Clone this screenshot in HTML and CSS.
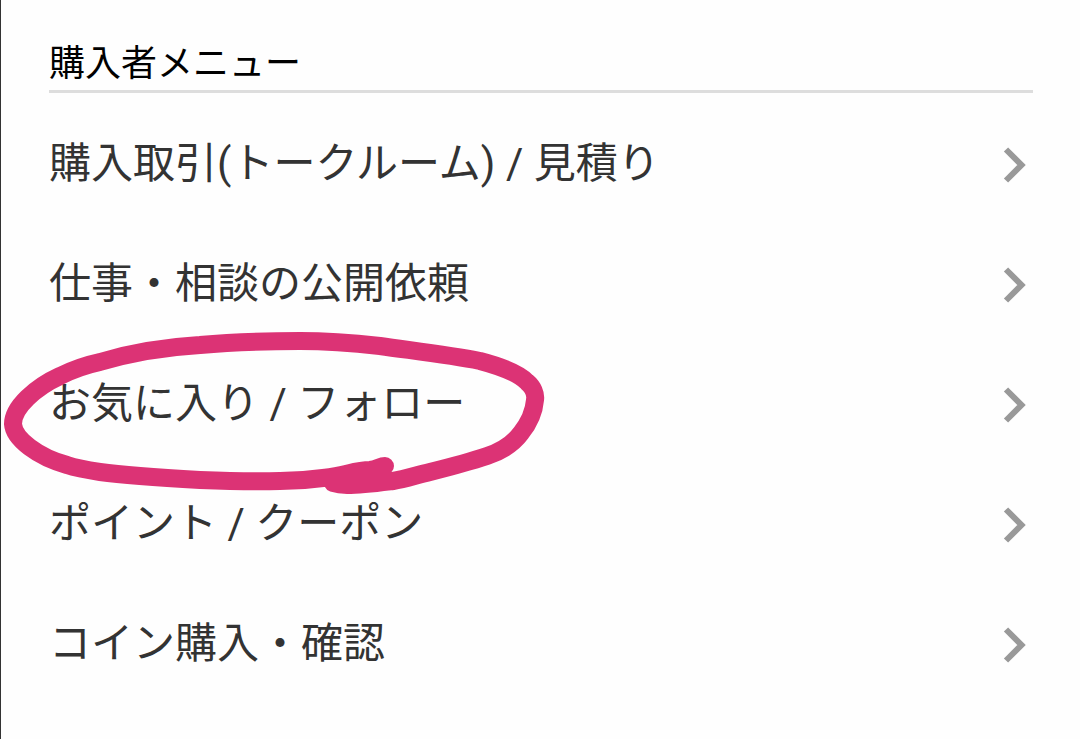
FILE: index.html
```html
<!DOCTYPE html>
<html lang="ja">

<head>
  <meta charset="utf-8">
  <meta name="viewport" content="width=device-width, initial-scale=1">
  <title>購入者メニュー</title>

  <link rel="stylesheet" href="styles.css">
</head>

<body>
  <nav class="menu" aria-labelledby="menu-title">
    <h1 class="menu-title" id="menu-title">購入者メニュー</h1>
    <ul class="menu-list">
      <li class="menu-item">
        <a class="menu-link" href="#talkroom">購入取引(トークルーム) / 見積り
          <svg class="chevron" viewBox="0 0 24 36" aria-hidden="true"><path d="M3 2.5 18.5 18 3 33.5"/></svg>
        </a>
      </li>
      <li class="menu-item">
        <a class="menu-link" href="#requests">仕事・相談の公開依頼
          <svg class="chevron" viewBox="0 0 24 36" aria-hidden="true"><path d="M3 2.5 18.5 18 3 33.5"/></svg>
        </a>
      </li>
      <li class="menu-item">
        <a class="menu-link" href="#favorites">お気に入り / フォロー
          <svg class="chevron" viewBox="0 0 24 36" aria-hidden="true"><path d="M3 2.5 18.5 18 3 33.5"/></svg>
        </a>
        <!-- hand-drawn circle -->
        <svg class="marker" viewBox="0 0 560 180" aria-hidden="true">
          <path d="M385 146C380 146 378 149 370 150C361 150 354 152 346 154C338 156 331 157 323 158C309 160 295 161 280 161C250 162 225 161 200 160C165 158 130 156 100 152C87 150 76 148 67 145C38 137 14 119 13 104C13 87 36 67 60 56C72 50 86 45 100 42C130 33 166 27 200 25C233 22 265 21 300 21C328 21 353 23 380 26C415 31 450 35 480 41C503 47 518 53 527 62C533 67 536 74 535 80C534 92 529 103 521 113C513 124 502 131 487 136C469 142 450 147 430 152C417 155 405 159 393 161C377 163 362 165 347 165C341 165 336 164 333 163"/>
        </svg>
      </li>
      <li class="menu-item">
        <a class="menu-link" href="#points">ポイント / クーポン
          <svg class="chevron" viewBox="0 0 24 36" aria-hidden="true"><path d="M3 2.5 18.5 18 3 33.5"/></svg>
        </a>
      </li>
      <li class="menu-item">
        <a class="menu-link" href="#coins">コイン購入・確認
          <svg class="chevron" viewBox="0 0 24 36" aria-hidden="true"><path d="M3 2.5 18.5 18 3 33.5"/></svg>
        </a>
      </li>
    </ul>
  </nav>
</body>

</html>
```
FILE: styles.css
```css
body {
  margin: 0;
  background-color: #fefefe;
  color: #333333;
  font-family: Roboto, "Noto Sans CJK JP", sans-serif;
}

.menu {
  box-sizing: border-box;
  min-height: 100vh;
  padding: 38px 47px 0 48px;
  border-left: 1px solid #333333;
}

.menu-title {
  margin: 0;
  border-bottom: 3px solid #dddddd;
  color: #000000;
  font-size: 36px;
  font-weight: 400;
  line-height: 52px;
}

.menu-list {
  list-style-type: none;
  margin: 0;
  padding: 6px 0 0;
}

.menu-item {
  position: relative;
}

.menu-link {
  display: flex;
  align-items: center;
  justify-content: space-between;
  height: 120px;
  color: #333333;
  font-size: 42px;
  text-decoration: none;
}

.chevron {
  flex: none;
  width: 24px;
  height: 36px;
  margin-top: 12px;
  margin-right: 6px;
  fill: none;
  stroke: #999999;
  stroke-width: 6;
}

.marker {
  position: absolute;
  top: -19px;
  left: -49px;
  width: 560px;
  height: 180px;
  fill: none;
  stroke: #dc3375;
  stroke-width: 18;
  stroke-linecap: round;
  stroke-linejoin: round;
  pointer-events: none;
}
```
